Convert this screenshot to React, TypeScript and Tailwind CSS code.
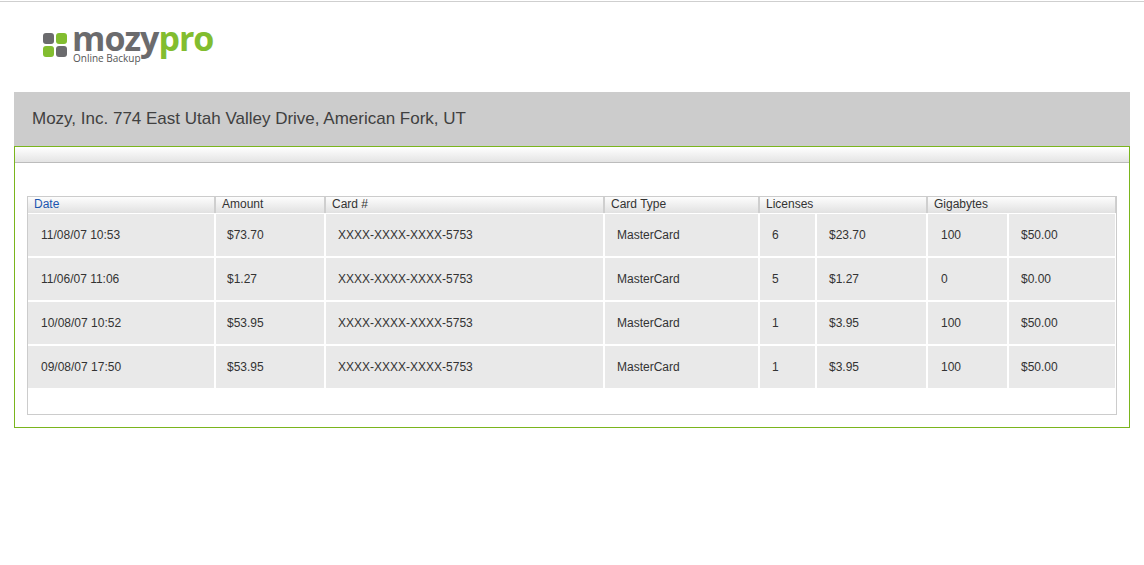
import React from "react";

const rows = [
  ["11/08/07 10:53", "$73.70", "XXXX-XXXX-XXXX-5753", "MasterCard", "6", "$23.70", "100", "$50.00"],
  ["11/06/07 11:06", "$1.27", "XXXX-XXXX-XXXX-5753", "MasterCard", "5", "$1.27", "0", "$0.00"],
  ["10/08/07 10:52", "$53.95", "XXXX-XXXX-XXXX-5753", "MasterCard", "1", "$3.95", "100", "$50.00"],
  ["09/08/07 17:50", "$53.95", "XXXX-XXXX-XXXX-5753", "MasterCard", "1", "$3.95", "100", "$50.00"],
];

const cols = "grid grid-cols-[186px_108px_277px_153px_55px_109px_79px_106px] gap-x-[2px]";

function Logo() {
  return (
    <div className="flex items-start">
      <div className="grid grid-cols-[11px_11px] gap-[2px] mt-[10px]">
        <div className="w-[11px] h-[11px] rounded-[3px] bg-[#6b6b6d]" />
        <div className="w-[11px] h-[11px] rounded-[3px] bg-[#82bd2f]" />
        <div className="w-[11px] h-[11px] rounded-[3px] bg-[#82bd2f]" />
        <div className="w-[11px] h-[11px] rounded-[3px] bg-[#6b6b6d]" />
      </div>
      <div className="relative ml-[5px] h-[40px]">
        <div
          className="text-[34px] leading-[30px] font-bold tracking-[-1px]"
          style={{ fontFamily: '"Open Sans", "Liberation Sans", sans-serif' }}
        >
          <span className="text-[#6b6b6d]">mozy</span>
          <span className="text-[#82bd2f]">pro</span>
        </div>
        <div
          className="absolute left-[1px] top-[30px] text-[10px] leading-[10px] text-[#555] whitespace-nowrap"
          style={{ fontFamily: '"Open Sans", "Liberation Sans", sans-serif' }}
        >
          Online Backup
        </div>
      </div>
    </div>
  );
}

export default function App() {
  return (
    <div
      className="w-[1144px] h-[565px] bg-white border-t border-[#cfcfcf] mt-px text-[#333]"
      style={{ fontFamily: '"Liberation Sans", Arial, sans-serif' }}
    >
      <div className="pl-[43px] pt-[21px] h-[90px]">
        <Logo />
      </div>
      <div className="mx-[14px] w-[1116px]">
        <div className="h-[54px] bg-[#cccccc] flex items-center pl-[18px] text-[17px] text-[#404040]">
          Mozy, Inc. 774 East Utah Valley Drive, American Fork, UT
        </div>
        <div className="border border-[#7ab51d] h-[282px]">
          <div className="h-[16px] bg-gradient-to-b from-white to-[#e4e4e4] border-b border-[#bcbcbc]" />
          <div className="mx-[12px] mt-[33px] border border-[#cccccc] h-[219px] text-[12px]">
            <div className={`${cols} bg-[#cfcfcf] h-[16px]`}>
              {[
                ["Date", "col-span-1 text-[#1a56b0]"],
                ["Amount", "col-span-1"],
                ["Card #", "col-span-1"],
                ["Card Type", "col-span-1"],
                ["Licenses", "col-span-2"],
                ["Gigabytes", "col-span-2"],
              ].map(([t, c]) => (
                <div
                  key={t}
                  className={`${c} bg-gradient-to-b from-[#fdfdfd] to-[#e1e1e1] pl-[6px] leading-[15px]`}
                >
                  {t}
                </div>
              ))}
            </div>
            <div className="flex flex-col gap-[2px] mt-[1px]">
              {rows.map((r, i) => (
                <div key={i} className={`${cols} h-[42px]`}>
                  {r.map((v, j) => (
                    <div
                      key={j}
                      className={`bg-[#e9e9e9] flex items-center ${j === 0 || j === 6 ? "pl-[13px]" : j === 1 ? "pl-[11px]" : "pl-[12px]"}`}
                    >
                      {v}
                    </div>
                  ))}
                </div>
              ))}
            </div>
          </div>
        </div>
      </div>
    </div>
  );
}
